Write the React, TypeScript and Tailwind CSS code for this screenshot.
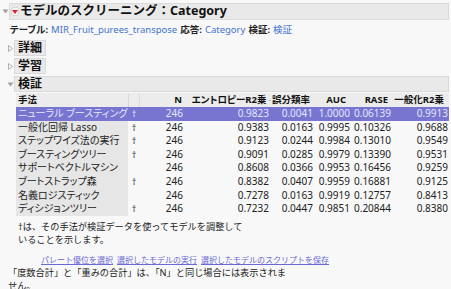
const rows = [
  { name: "ニューラル ブースティング", dag: true, n: 246, ent: "0.9823", mis: "0.0041", auc: "1.0000", rase: "0.06139", gr2: "0.9913", sel: true },
  { name: "一般化回帰 Lasso", dag: true, n: 246, ent: "0.9383", mis: "0.0163", auc: "0.9995", rase: "0.10326", gr2: "0.9688" },
  { name: "ステップワイズ法の実行", dag: true, n: 246, ent: "0.9123", mis: "0.0244", auc: "0.9984", rase: "0.13010", gr2: "0.9549" },
  { name: "ブースティングツリー", dag: true, n: 246, ent: "0.9091", mis: "0.0285", auc: "0.9979", rase: "0.13390", gr2: "0.9531" },
  { name: "サポートベクトルマシン", dag: false, n: 246, ent: "0.8608", mis: "0.0366", auc: "0.9953", rase: "0.16456", gr2: "0.9259" },
  { name: "ブートストラップ森", dag: true, n: 246, ent: "0.8382", mis: "0.0407", auc: "0.9959", rase: "0.16881", gr2: "0.9125" },
  { name: "名義ロジスティック", dag: false, n: 246, ent: "0.7278", mis: "0.0163", auc: "0.9919", rase: "0.12757", gr2: "0.8413" },
  { name: "ディシジョンツリー", dag: true, n: 246, ent: "0.7232", mis: "0.0447", auc: "0.9851", rase: "0.20844", gr2: "0.8380" },
];

const cols = "grid grid-cols-[112px_12px_44px_88px_43px_36px_41px_57px]";

function Down() {
  return (
    <svg width="7" height="5" viewBox="0 0 7 5">
      <path d="M0.5 0.5 L6.5 0.5 L3.5 4.5 Z" fill="#a0a0a0" />
    </svg>
  );
}

function Right() {
  return (
    <svg width="5" height="7" viewBox="0 0 5 7">
      <path d="M0.5 0.5 L4.5 3.5 L0.5 6.5 Z" fill="none" stroke="#b0b0b0" strokeWidth="1" />
    </svg>
  );
}

function RedMenu() {
  return (
    <span className="flex h-[9px] w-[8px] items-center justify-center rounded-[2px] border border-[#d8d8d8] bg-[#f4f4f4]">
      <svg width="6" height="4" viewBox="0 0 6 4">
        <path d="M0 0 L6 0 L3 4 Z" fill="#e0202a" />
      </svg>
    </span>
  );
}

function SubHead({ label, open, full }: { label: string; open?: boolean; full?: boolean }) {
  return (
    <div className="flex items-center">
      <span className="flex w-[14px] justify-center pl-[6px]">{open ? <Down /> : <Right />}</span>
      <div
        className={`flex h-[16px] items-center border border-[#d9d9d9] bg-[#e9e9e9] px-[3px] text-[12px] font-bold text-[#111] ${
          full ? "mr-[2px] flex-1" : ""
        }`}
      >
        {label}
      </div>
    </div>
  );
}

export default function App() {
  return (
    <div
      className="h-[289px] w-[451px] overflow-hidden bg-[#f8f8f8] text-[#222] [font-feature-settings:'palt']"
      style={{ fontFamily: '"Noto Sans", "Noto Sans CJK JP", sans-serif' }}
    >
      {/* title */}
      <div className="flex items-center pt-[3px]">
        <span className="flex w-[9px] justify-center pl-[2px]">
          <Down />
        </span>
        <div className="mr-[2px] flex h-[17px] flex-1 items-center gap-[1px] border border-[#dadada] bg-[#e9e9e9] pl-[1px]">
          <RedMenu />
          <span className="text-[12.5px] font-bold leading-none text-[#111] [font-feature-settings:normal]">
            モデルのスクリーニング：Category
          </span>
        </div>
      </div>

      <div className="mt-[2px] flex gap-[3px] whitespace-nowrap pl-[10px] text-[9.5px] leading-[16px]">
        <span className="font-bold">テーブル:</span>
        <span className="text-[#3f73d0]">MIR_Fruit_purees_transpose</span>
        <span className="font-bold">応答:</span>
        <span className="text-[#3f73d0]">Category</span>
        <span className="font-bold">検証:</span>
        <span className="text-[#3f73d0]">検証</span>
      </div>

      <div className="mt-[2px] flex flex-col gap-[2px]">
        <SubHead label="詳細" />
        <SubHead label="学習" />
        <SubHead label="検証" open full />
      </div>

      {/* table */}
      <div className="ml-[16px] mt-[1px] w-[433px] whitespace-nowrap text-[10px] leading-[13.5px]">
        <div className={`${cols} h-[14px] items-center bg-[#ececec] text-[9.5px] font-bold text-[#111]`}>
          <span className="pl-[2px]">手法</span>
          <span className="h-full border-x border-[#dadada]" />
          <span className="flex justify-end pr-[2px]">N</span>
          <span className="flex items-center justify-end gap-[2px] pr-[1px]">
            エントロピーR2乗<span className="text-[8px] font-normal text-[#999]">-</span>
          </span>
          <span className="flex justify-end pr-[5px]">誤分類率</span>
          <span className="flex justify-end pr-[5px]">AUC</span>
          <span className="flex justify-end pr-[4px]">RASE</span>
          <span className="flex justify-end pr-[5px]">一般化R2乗</span>
        </div>
        {rows.map((r) => (
          <div
            key={r.name}
            className={`${cols} h-[13.6px] items-center ${r.sel ? "bg-[#7775cf] text-[#e4e6ff]" : ""}`}
          >
            <span className={`h-full overflow-hidden pl-[2px] ${r.sel ? "" : "bg-[#e6e6e6]"}`}>{r.name}</span>
            <span className={`text-center text-[9px] ${r.sel ? "" : "text-[#333]"}`}>{r.dag ? "†" : ""}</span>
            <span className="pr-[1px] text-right">{r.n}</span>
            <span className="pr-[3px] text-right">{r.ent}</span>
            <span className="pr-[2px] text-right">{r.mis}</span>
            <span className="pr-[1px] text-right">{r.auc}</span>
            <span className="pr-[1px] text-right">{r.rase}</span>
            <span className="pr-[1px] text-right">{r.gr2}</span>
          </div>
        ))}
      </div>

      <div className="mt-[4px] pl-[18px] text-[9.2px] leading-[13px] [font-feature-settings:normal]">
        <div>†は、その手法が検証データを使ってモデルを調整して</div>
        <div>いることを示します。</div>
      </div>

      <div className="mt-[7px] flex gap-[4px] pl-[41px] text-[8px] leading-[13px] text-[#6a6ad6] [font-feature-settings:normal]">
        <span className="underline">パレート優位を選択</span>
        <span className="underline">選択したモデルの実行</span>
        <span className="underline">選択したモデルのスクリプトを保存</span>
      </div>

      <div className="pl-[8px] text-[9.2px] leading-[13px] [font-feature-settings:normal]">
        <div>「度数合計」と「重みの合計」は、「N」と同じ場合には表示されま</div>
        <div>せん。</div>
      </div>
    </div>
  );
}
